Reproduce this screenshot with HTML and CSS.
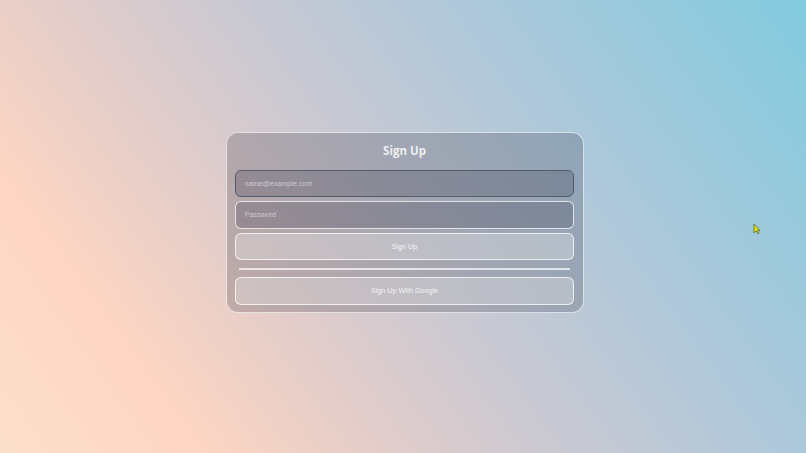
FILE: index.html
```html
<!DOCTYPE html>
<html>
<head>
<meta charset="utf-8">
<link rel="stylesheet" href="styles.css">
</head>
<body>
<main class="page">
  <form class="card">
    <h1 class="title">Sign Up</h1>
    <input class="field field-focus" type="email" placeholder="name@example.com">
    <input class="field" type="password" placeholder="Password">
    <button class="btn" type="button">Sign Up</button>
    <hr class="divider">
    <button class="btn" type="button">Sign Up With Google</button>
  </form>
  <svg class="cursor" width="8" height="12" viewBox="0 0 8 12"><path d="M1 1 L1 10 L3 8 L5 11 L6 10.5 L4.5 7.5 L7 7.5 Z" fill="#e4e020" stroke="#5a6a20" stroke-width="0.8"/></svg>
</main>
</body>
</html>
```
FILE: styles.css
```css
html, body { margin: 0; padding: 0; }
body {
  width: 806px;
  height: 453px;
  overflow: hidden;
  font-family: "Liberation Sans", Arial, sans-serif;
}
.page {
  position: relative;
  width: 806px;
  height: 453px;
  background: linear-gradient(54deg, #fde0cc 0%, #fdd5c2 18%, #dccbcc 38%, #c9c9d3 50%, #adc8da 70%, #82cbdf 100%);
  display: flex;
  justify-content: center;
  align-items: flex-start;
}
.card {
  box-sizing: border-box;
  margin-top: 132px;
  margin-left: 3px;
  width: 358px;
  padding: 7.5px 8.5px 7.5px;
  border: 1.5px solid rgba(255,255,255,0.65);
  border-radius: 12px;
  background: rgba(40,40,50,0.21);
  display: flex;
  flex-direction: column;
  gap: 4px;
}
.title {
  margin: 0 0 5px;
  text-align: center;
  font-family: "Open Sans", "Noto Sans", sans-serif;
  font-weight: 700;
  font-size: 11.5px;
  line-height: 20px;
  color: #eeeef2;
}
.field {
  box-sizing: border-box;
  height: 27.5px;
  margin: 0;
  padding: 0 8.5px;
  border: 1.5px solid rgba(255,255,255,0.75);
  border-radius: 6px;
  background: rgba(50,50,70,0.24);
  font-family: "Liberation Sans", Arial, sans-serif;
  font-size: 7.2px;
  color: #eee;
  outline: none;
}
.field::placeholder { color: rgba(220,220,226,0.8); }
.field-focus {
  border-color: #555c6c;
}
.btn {
  box-sizing: border-box;
  height: 27.5px;
  margin: 0;
  border: 1.5px solid rgba(255,255,255,0.75);
  border-radius: 6px;
  background: rgba(255,255,255,0.27);
  font-family: "Liberation Sans", Arial, sans-serif;
  font-size: 7.2px;
  color: #f4f4f6;
}
.divider {
  margin: 3.5px 4px;
  border: none;
  height: 2px;
  background: rgba(255,255,255,0.7);
}
.cursor {
  position: absolute;
  left: 753px;
  top: 223px;
}
```
